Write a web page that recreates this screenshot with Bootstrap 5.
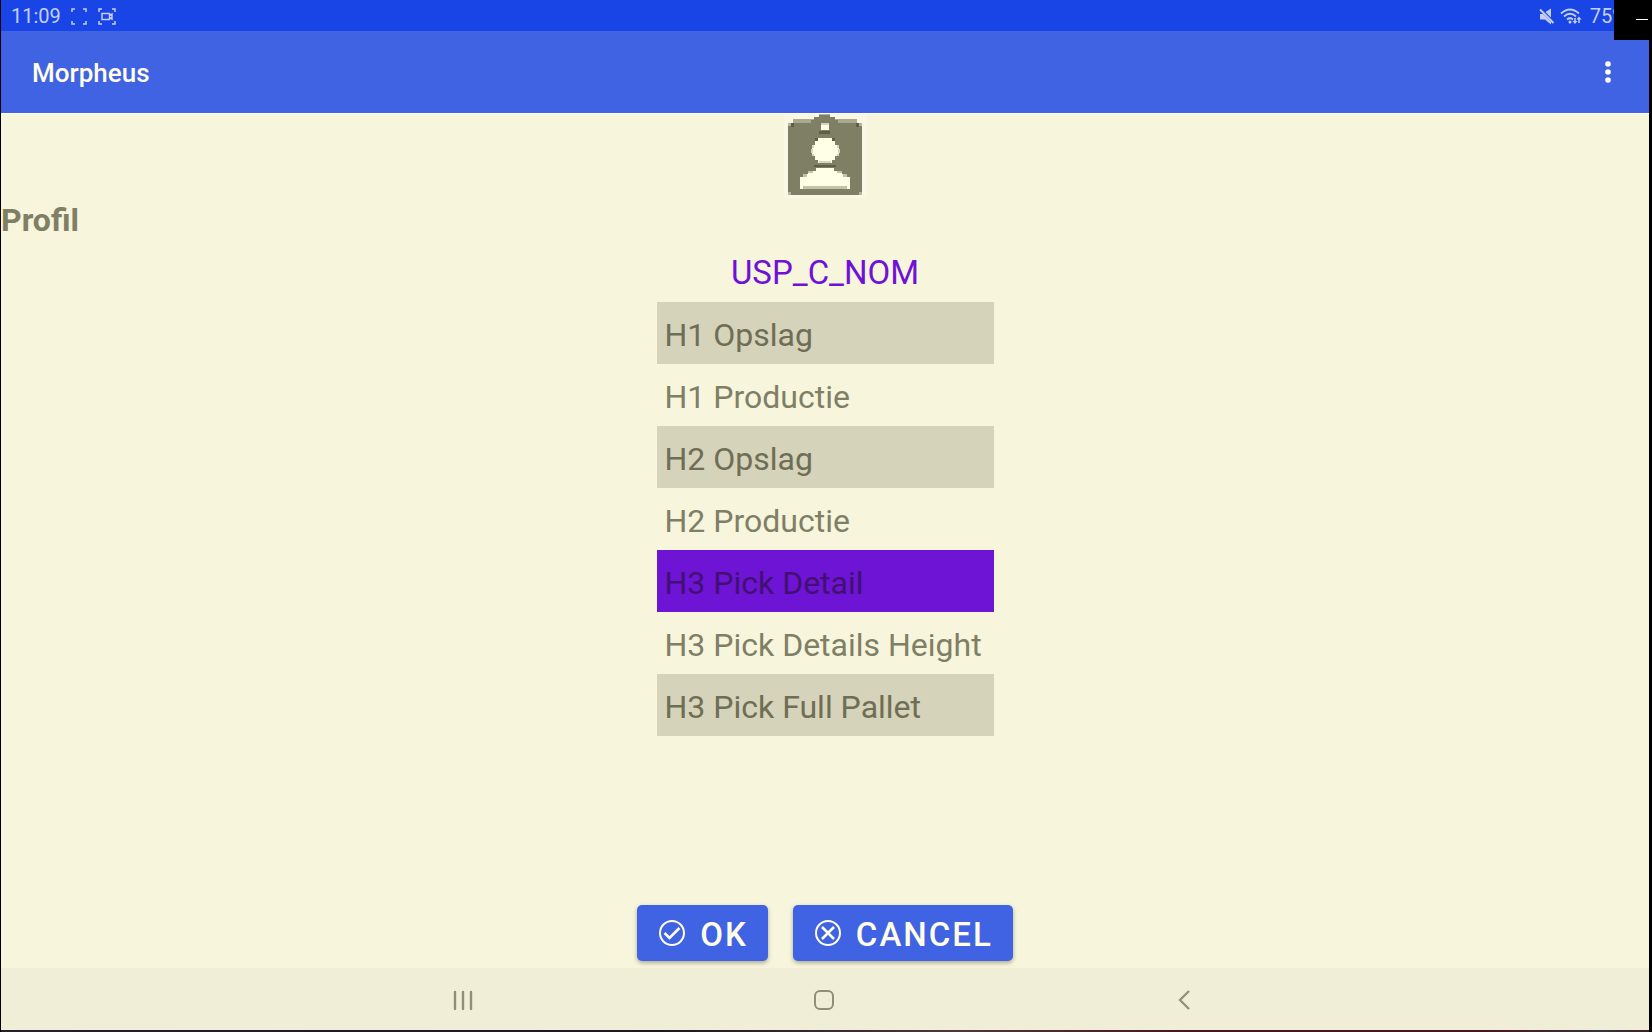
<!DOCTYPE html>
<html lang="nl">
<head>
<meta charset="utf-8">
<meta name="viewport" content="width=device-width, initial-scale=1">
<title>Morpheus</title>
<link href="https://cdn.jsdelivr.net/npm/bootstrap@5.3.0/dist/css/bootstrap.min.css" rel="stylesheet">
<style>
  body { font-family: Roboto, "Liberation Sans", sans-serif; background: #000; color: #7f7f66; }
  .screen { border-left: 1px solid #000; border-right: 3px solid #000; }
  .status { height: 31px; background: #1a45e6; color: #c3cff6; font-size: 20px; line-height: 31px; padding: 2px 22px 0 10px; }
  .status-left { gap: 8px; }
  .corner { width: 38px; height: 40px; background: #000; padding: 19px 4px 0 0; z-index: 5; }
  .corner-dash { width: 12px; height: 1px; background: #fff; }
  .appbar { height: 82px; background: #4063e4; color: #fffde6; padding: 0 31px; }
  .appbar-title { font-size: 26px; line-height: 32px; font-weight: 500; color: #fffde6; padding-top: 2px; }
  .appbar .btn { width: 20px; height: 40px; }
  .content { background: #f7f5dc; border-top: 1px solid #fdfcf0; }
  .avatar-box { width: 83px; height: 84px; background: #faf8e4; }
  .section-title { font-size: 32px; line-height: 40px; font-weight: 700; margin-top: 2px; }
  .profiles { width: 337px; font-size: 32px; line-height: 40px; margin-top: 2px; }
  .profiles th { font-size: 33px; font-weight: 400; color: #6f12d6; text-align: center; height: 60px; padding: 2px 8px 0; }
  .profiles td { height: 62px; padding: 4px 8px 0; color: #7f7f66; white-space: nowrap; }
  .profiles .shade td { background: #d5d3b9; color: #6e6e56; }
  .profiles .picked td { background: #6e14d4; color: #421073; }
  .actions { gap: 25px; padding-bottom: 7px; }
  .action { height: 56px; padding: 0 20px 0 21px; gap: 14px; border: 0; border-radius: 5px; background: #4063e4; color: #fffde6; font-size: 33px; line-height: 54px; font-weight: 500; letter-spacing: 2px; box-shadow: 0 2px 4px rgba(60, 60, 40, .4); }
  .action span { padding-top: 3px; }
  .action:hover { background: #3858d0; color: #fffde6; }
  .sysnav { height: 62px; background: #f0eed6; padding-right: 3px; }
  .sysnav .btn { width: 21.9%; }
  .desk-edge { height: 2px; background: linear-gradient(90deg, #23202c 0%, #1d1722 40%, #4a383c 58%, #4a1520 72%, #4a1520 90%, #33343c 97%, #3a2024 100%); }
</style>
<script src="https://cdn.jsdelivr.net/npm/bootstrap@5.3.0/dist/js/bootstrap.bundle.min.js"></script>
</head>
<body>
<div class="corner position-absolute top-0 end-0 d-flex justify-content-end"><div class="corner-dash"></div></div>
<div class="screen d-flex flex-column min-vh-100">
  <div class="status d-flex justify-content-between">
    <div class="status-left d-flex align-items-center">
      <span>11:09</span>
      <svg width="20" height="20" viewBox="0 0 20 20" fill="none" stroke="#c3cff6" stroke-width="1.5"><path d="M6 2H3V5M14 2h3v3M6 17H3v-3M14 17h3v-3"/></svg>
      <svg width="20" height="20" viewBox="0 0 20 20" fill="none" stroke="#c3cff6" stroke-width="1.5"><path d="M5 2H2V5M15 2h3v3M5 17H2v-3M15 17h3v-3M5 6.500h7.500v6H5zM12.500 8.500l2.500-1.500v5l-2.500-1.500"/></svg>
    </div>
    <div class="d-flex align-items-center">
      <svg width="18" height="18" viewBox="0 0 18 18"><path d="M2 6h3l8 8V16.500L7 11.500H2zM7.500 4L13 .5v9z" fill="#c3cff6"/><path d="M2 1.500L15.500 15" stroke="#c3cff6" stroke-width="1.900"/></svg>
      <svg class="ms-1 me-2" width="22" height="18" viewBox="0 0 22 18" fill="none" stroke="#c3cff6" stroke-width="1.700"><path d="M1 5.500Q10-2.500 19 5.500M4 8.500Q10 3 16 8.500M7 11.500Q10 9 13 11.500"/><circle cx="10" cy="14" r="1.500" fill="#c3cff6" stroke="none"/><path d="M15 10v4M19 15v-4" stroke-width="1.500"/><path d="M12.500 13h5L15 16zM16.500 11.500h5L19 8.500z" fill="#c3cff6" stroke="none"/></svg>
      <span>75%</span>
    </div>
  </div>
  <header class="appbar d-flex align-items-center justify-content-between">
    <h1 class="appbar-title mb-0">Morpheus</h1>
    <button type="button" class="btn p-0 border-0 d-flex align-items-center justify-content-center" aria-label="Menu">
      <svg width="6" height="22" viewBox="0 0 6 22" fill="#fffde6"><circle cx="3" cy="3" r="2.800"/><circle cx="3" cy="11" r="2.800"/><circle cx="3" cy="19" r="2.800"/></svg>
    </button>
  </header>
  <main class="content flex-grow-1 d-flex flex-column">
    <div class="avatar-box mx-auto">
      <svg class="d-block" width="83" height="84" viewBox="0 0 83 84" shape-rendering="crispEdges">
        <path fill="#a9a990" d="M9 5h64v4H9z"/>
        <path fill="#7f7f66" d="M35 0h11v3h5v3h3v3h20v3h4v66h-3v3H7v-3H4V12h3V9h20V6h3V3h5z"/>
        <path fill="#b5b59c" d="M4 9h3v3H4zM75 9h3v3h-3zM4 78h3v3H4zM75 78h3v3h-3zM35 0h11v1H35z"/>
        <path fill="#5f5f48" d="M7 9h3v4H7zM72 9h3v4h-3zM35 17h11v3H35zM31 24h3v3h-3zM48 24h3v3h-3zM30 51h22v2H30z"/>
        <path fill="#fffee6" d="M37 9h8v7h-8zM34 24h14v3h3v4h4v11h-4v4h-3v3H34v-3h-3v-4h-3V31h3v-4h3z"/>
        <path fill="#d5d5bd" d="M37 9h8v2h-8zM28 31h2v3h-2zM53 31h2v3h-2zM27 35h2v4h-2zM54 35h2v4h-2zM28 40h2v2h-2zM53 40h2v2h-2zM35 47h12v2H35z"/>
        <path fill="#fffee6" d="M32 54h18v3h8v3h5v3h3v12H16V63h3v-3h5v-3h8z"/>
        <path fill="#c3c3aa" d="M19 60h4v3h-4zM59 60h4v3h-4zM24 57h5v2h-5zM53 57h5v2h-5zM19 72h44v3H19z"/>
      </svg>
    </div>
    <h2 class="section-title mb-0">Profil</h2>
    <table class="profiles mx-auto">
      <thead><tr><th scope="col">USP_C_NOM</th></tr></thead>
      <tbody>
        <tr class="shade"><td>H1 Opslag</td></tr>
        <tr><td>H1 Productie</td></tr>
        <tr class="shade"><td>H2 Opslag</td></tr>
        <tr><td>H2 Productie</td></tr>
        <tr class="picked" aria-selected="true"><td>H3 Pick Detail</td></tr>
        <tr><td>H3 Pick Details Height</td></tr>
        <tr class="shade"><td>H3 Pick Full Pallet</td></tr>
      </tbody>
    </table>
    <div class="actions d-flex justify-content-center mt-auto">
      <button type="button" class="action btn d-flex align-items-center">
        <svg width="28" height="28" viewBox="0 0 28 28" fill="none" stroke="#fffde6"><circle cx="14" cy="14" r="12" stroke-width="2"/><path d="M6.500 14l5 5L21.500 9" stroke-width="2.600"/></svg>
        <span>OK</span>
      </button>
      <button type="button" class="action btn d-flex align-items-center">
        <svg width="28" height="28" viewBox="0 0 28 28" fill="none" stroke="#fffde6"><circle cx="14" cy="14" r="12" stroke-width="2"/><path d="M8 8l12 12M20 8L8 20" stroke-width="2.600"/></svg>
        <span>CANCEL</span>
      </button>
    </div>
  </main>
  <nav class="sysnav d-flex justify-content-center" aria-label="System">
    <button type="button" class="btn border-0 p-0" aria-label="Recents"><svg width="20" height="20" viewBox="0 0 20 20" stroke="#8f8f78" stroke-width="2.400" stroke-linecap="round"><path d="M2 2v17M10 2v17M18 2v17"/></svg></button>
    <button type="button" class="btn border-0 p-0" aria-label="Home"><svg width="22" height="22" viewBox="0 0 22 22" fill="none" stroke="#8f8f78" stroke-width="2"><rect x="2" y="2" width="18" height="18" rx="5"/></svg></button>
    <button type="button" class="btn border-0 p-0" aria-label="Back"><svg width="12" height="20" viewBox="0 0 12 20" fill="none" stroke="#8f8f78" stroke-width="2.200"><path d="M11 1L2 10l9 9"/></svg></button>
  </nav>
  <div class="desk-edge"></div>
</div>
</body>
</html>
